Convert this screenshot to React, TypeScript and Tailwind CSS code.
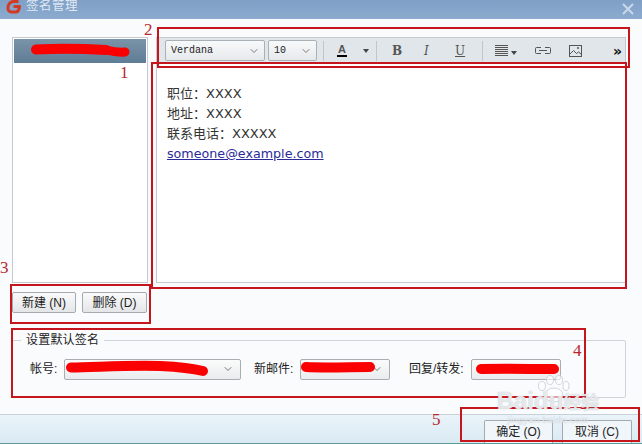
import { ChevronDown } from "lucide-react";

const cjk = "font-['Liberation_Sans','Noto_Sans_CJK_SC',sans-serif]";

const Caret = () => (
  <span className="inline-block w-0 h-0 border-x-[3px] border-x-transparent border-t-[4px] border-t-[#444]" />
);

const Select = ({ width, label }: { width: string; label?: string }) => (
  <div className={`${width} h-[21px] flex items-center justify-between pl-[5px] pr-[4px] bg-gradient-to-b from-[#f8f9fa] to-[#e6e9ec] border border-[#a9b0b6] rounded-[2px]`}>
    <span className="text-[10px] text-[#222] font-['Liberation_Mono',monospace]">{label}</span>
    <ChevronDown size={12} strokeWidth={2} className="text-[#777]" />
  </div>
);

const Divider = () => <div className="w-px h-[20px] bg-[#bfc7cc]" />;

const AccountSelect = ({ width, chevron = true }: { width: string; chevron?: boolean }) => (
  <div className={`${width} h-[21px] flex items-center justify-end pr-[6px] bg-gradient-to-b from-[#fbfbfb] to-[#e9ecee] border border-[#a9aeb2] rounded-[2px]`}>
    {chevron && <ChevronDown size={12} strokeWidth={2} className="text-[#777]" />}
  </div>
);

const Button = ({ label, width }: { label: string; width: string }) => (
  <div className={`${width} h-[21px] flex items-center justify-center text-[12px] text-[#222] bg-gradient-to-b from-[#fafafa] to-[#e4e6e8] border border-[#a4aaae] rounded-[2px]`}>
    {label}
  </div>
);

const Note = ({ className }: { className: string }) => (
  <div className={`absolute border-[2px] border-[#c4161c] pointer-events-none ${className}`} />
);

const Num = ({ className, n }: { className: string; n: string }) => (
  <span className={`absolute text-[17px] leading-none text-[#b8282c] font-['Liberation_Serif',serif] ${className}`}>{n}</span>
);

// red marker strokes that hide the account names
const Scribbles = () => (
  <svg width="642" height="444" viewBox="0 0 642 444" className="absolute left-0 top-0 pointer-events-none">
    <g fill="none" stroke="#fb0000" strokeLinecap="round" strokeLinejoin="round">
      <path d="M36 49.5 C60 48 90 49 106 50" strokeWidth="10" />
      <path d="M106 50 C114 52 120 52.5 125 52" strokeWidth="9" />
      <path d="M71 367.5 C100 367 130 365 160 366 C180 367 195 369 203 371" strokeWidth="10" />
      <path d="M306 367 C325 368 350 367 370 367" strokeWidth="10" />
      <path d="M481 369 C505 368.5 530 369 554 369" strokeWidth="10" />
    </g>
  </svg>
);

const Watermark = () => (
  <div className="absolute left-[488px] top-[375px] w-[120px] flex flex-col items-center pointer-events-none">
    <svg width="34" height="28" viewBox="0 0 34 28" className="-mb-[14px] ml-[10px]">
      <g fill="#ffffff" fillOpacity="0.6" stroke="#c4ccd4" strokeOpacity="0.8" strokeWidth="1">
        <ellipse cx="6" cy="11" rx="3.5" ry="4.5" />
        <ellipse cx="14" cy="5" rx="3.5" ry="4.5" />
        <ellipse cx="23" cy="5" rx="3.5" ry="4.5" />
        <ellipse cx="30" cy="11" rx="3" ry="4.5" />
        <ellipse cx="18" cy="20" rx="9" ry="7" />
      </g>
    </svg>
    <span className="text-[24px] leading-[24px] font-bold whitespace-nowrap text-white/70 [text-shadow:0_0_1px_#aab4be]">
      Baidu<span className="text-[18px]">经验</span>
    </span>
    <span className="text-[9px] leading-[8px] mt-[1px] tracking-[0.5px] text-white/70 [text-shadow:0_0_1px_#aab4be] font-['Liberation_Sans',sans-serif]">jingyan.baidu.com</span>
  </div>
);

export default function App() {
  return (
    <div className={`relative w-[642px] h-[444px] overflow-hidden flex flex-col bg-[#f9fbfd] ${cjk}`}>
      {/* title bar */}
      <div className="h-[19px] shrink-0 flex items-center justify-between pl-[6px] pr-[8px] bg-gradient-to-b from-[#7f9fc6] to-[#8cabce]">
        <div className="flex items-center gap-[5px] -mt-[6px]">
          <svg width="15" height="14" viewBox="0 0 15 14">
            <path d="M12.5 1.5 H7 Q3 2 2 7 Q1.5 12 6 12 H10 Q13 11.5 13.5 6.5 H7.5" fill="none" stroke="#d23a24" strokeWidth="3" strokeLinejoin="round" />
          </svg>
          <span className="text-[12.5px] tracking-[0.5px] text-[#dfe9f3]">签名管理</span>
        </div>
        <svg width="12" height="12" viewBox="0 0 12 12" className="-mt-[1px]">
          <path d="M1 1 L11 11 M11 1 L1 11" stroke="#c9d9ea" strokeWidth="2" />
        </svg>
      </div>

      {/* main */}
      <div className="flex-1 flex flex-col pl-[12px] pr-[16px] pt-[18px]">
        <div className="flex gap-[8px] h-[246px]">
          <div className="w-[136px] bg-white border border-[#c4cacd] p-px">
            <div className="h-[24px] bg-gradient-to-b from-[#7a93a8] to-[#5f7d96]" />
          </div>
          <div className="flex-1 flex flex-col border border-[#c4cacd] bg-white">
            <div className="h-[25px] shrink-0 flex items-center pl-[8px] pr-[3px] bg-[#e0e6e9]">
              <Select width="w-[100px]" label="Verdana" />
              <div className="w-[3px]" />
              <Select width="w-[49px]" label="10" />
              <div className="w-[6px]" />
              <Divider />
              <div className="w-[12px]" />
              <div className="flex flex-col items-center w-[12px] leading-none">
                <span className="text-[11px] font-bold text-[#555] font-['Liberation_Sans',sans-serif] leading-[10px]">A</span>
                <span className="w-[10px] h-[2px] bg-black mt-px" />
              </div>
              <div className="w-[15px]" />
              <Caret />
              <div className="w-[7px]" />
              <Divider />
              <div className="w-[15px]" />
              <span className="w-[11px] text-[12px] font-bold text-[#555] font-['DejaVu_Serif',serif]">B</span>
              <div className="w-[21px]" />
              <span className="w-[9px] text-[12px] italic text-[#555] font-['DejaVu_Serif',serif]">I</span>
              <div className="w-[22px]" />
              <span className="w-[10px] text-[12px] underline text-[#555] font-['DejaVu_Serif',serif]">U</span>
              <div className="w-[17px]" />
              <Divider />
              <div className="w-[12px]" />
              <svg width="13" height="11" viewBox="0 0 13 11">
                <path d="M0 .5H13M0 2.5H13M0 4.5H13M0 6.5H13M0 8.5H13M0 10.5H13" stroke="#555" strokeWidth="1" />
              </svg>
              <div className="w-[3px]" />
              <span className="mt-[4px] flex"><Caret /></span>
              <div className="w-[18px]" />
              <svg width="16" height="7" viewBox="0 0 16 7">
                <path d="M6 .5H1.5a1 1 0 0 0-1 1v4a1 1 0 0 0 1 1H6M10 .5h4.5a1 1 0 0 1 1 1v4a1 1 0 0 1-1 1H10M4 3.5H12" fill="none" stroke="#555" strokeWidth="1" />
              </svg>
              <div className="w-[18px]" />
              <svg width="13" height="12" viewBox="0 0 13 12">
                <rect x=".5" y=".5" width="12" height="11" fill="none" stroke="#555" />
                <path d="M1 9 L4.5 5.5 L7.5 8.5 L9.5 7 L12 9" fill="none" stroke="#555" />
                <circle cx="9" cy="3" r="1" fill="#555" />
              </svg>
              <div className="flex-1" />
              <span className="text-[14px] leading-none font-bold text-[#111] font-['DejaVu_Sans',sans-serif]">»</span>
            </div>
            <div className="flex-1 pt-[21px] pl-[10px] text-[13px] leading-[20px] text-[#333] font-['DejaVu_Sans','Noto_Sans_CJK_SC',sans-serif]">
              <div>职位：XXXX</div>
              <div>地址：XXXX</div>
              <div>联系电话：XXXXX</div>
              <div className="text-[#2a2a9a] underline text-[12.7px]">someone@example.com</div>
            </div>
          </div>
        </div>

        <div className="flex gap-[6px] mt-[9px]">
          <Button label="新建 (N)" width="w-[64px]" />
          <Button label="删除 (D)" width="w-[65px]" />
        </div>

        {/* default signature group */}
        <div className="relative mt-[27px] h-[58px] border border-[#cfd4d8] rounded-[2px] flex items-center pl-[17px] text-[12px] text-[#222]">
          <span className="absolute -top-[9px] left-[8px] px-[5px] leading-[16px] tracking-[0.2px] bg-[#f9fbfd]">设置默认签名</span>
          <span className="w-[34px]">帐号:</span>
          <AccountSelect width="w-[177px]" />
          <span className="ml-[13px] w-[46px]">新邮件:</span>
          <AccountSelect width="w-[90px]" />
          <span className="ml-[19px] w-[62px]">回复/转发:</span>
          <AccountSelect width="w-[90px]" chevron={false} />
        </div>
      </div>

      {/* footer */}
      <div className="h-[30px] shrink-0 border-t border-[#c8d0d8] border-b-[1px] border-b-[#5c9a96] bg-gradient-to-b from-[#eaf3f9] to-[#d9eaf3] flex items-end justify-end gap-[9px] pr-[10px]">
        <div className="w-[69px] h-[23px] flex items-center justify-center text-[12px] text-[#222] bg-[#f1f6fa] border border-b-0 border-[#a4aaae] rounded-t-[2px]">确定 (O)</div>
        <div className="w-[70px] h-[23px] flex items-center justify-center text-[12px] text-[#222] bg-[#f1f6fa] border border-b-0 border-[#a4aaae] rounded-t-[2px]">取消 (C)</div>
      </div>

      <Scribbles />

      {/* annotation boxes */}
      <Note className="left-[157px] top-[27px] w-[473px] h-[41px]" />
      <Note className="left-[151px] top-[62px] w-[476px] h-[227px]" />
      <Note className="left-[10px] top-[284px] w-[141px] h-[40px]" />
      <Note className="left-[11px] top-[328px] w-[575px] h-[70px]" />
      <Note className="left-[460px] top-[407px] w-[180px] h-[35px]" />
      <Num className="left-[144px] top-[21px]" n="2" />
      <Num className="left-[120px] top-[64px]" n="1" />
      <Num className="left-[0px] top-[259px]" n="3" />
      <Num className="left-[573px] top-[342px]" n="4" />
      <Num className="left-[432px] top-[411px]" n="5" />

      <Watermark />
    </div>
  );
}
